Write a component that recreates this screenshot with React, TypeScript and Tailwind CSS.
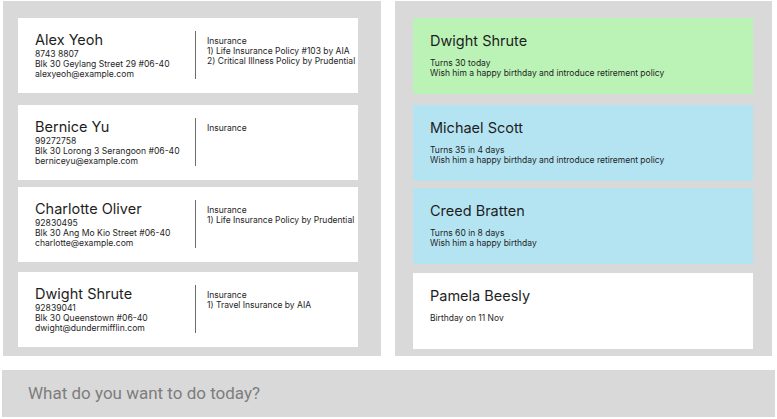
import React from 'react';

interface Client {
  name: string;
  phone: string;
  address: string;
  email: string;
  policies: string[];
  mt: string;
}

interface Reminder {
  name: string;
  lines: string[];
  tone: string;
  mt: string;
}

const clients: Client[] = [
  {
    name: 'Alex Yeoh',
    phone: '8743 8807',
    address: 'Blk 30 Geylang Street 29 #06-40',
    email: 'alexyeoh@example.com',
    policies: ['1) Life Insurance Policy #103 by AIA', '2) Critical Illness Policy by Prudential'],
    mt: 'mt-0',
  },
  {
    name: 'Bernice Yu',
    phone: '99272758',
    address: 'Blk 30 Lorong 3 Serangoon #06-40',
    email: 'berniceyu@example.com',
    policies: [],
    mt: 'mt-[12px]',
  },
  {
    name: 'Charlotte Oliver',
    phone: '92830495',
    address: 'Blk 30 Ang Mo Kio Street #06-40',
    email: 'charlotte@example.com',
    policies: ['1) Life Insurance Policy by Prudential'],
    mt: 'mt-[7px]',
  },
  {
    name: 'Dwight Shrute',
    phone: '92839041',
    address: 'Blk 30 Queenstown #06-40',
    email: 'dwight@dundermifflin.com',
    policies: ['1) Travel Insurance by AIA'],
    mt: 'mt-[10px]',
  },
];

const reminders: Reminder[] = [
  {
    name: 'Dwight Shrute',
    lines: ['Turns 30 today', 'Wish him a happy birthday and introduce retirement policy'],
    tone: 'bg-[#bbf3b7]',
    mt: 'mt-0',
  },
  {
    name: 'Michael Scott',
    lines: ['Turns 35 in 4 days', 'Wish him a happy birthday and introduce retirement policy'],
    tone: 'bg-[#b4e4f2]',
    mt: 'mt-[11px]',
  },
  {
    name: 'Creed Bratten',
    lines: ['Turns 60 in 8 days', 'Wish him a happy birthday'],
    tone: 'bg-[#b4e4f2]',
    mt: 'mt-[7px]',
  },
  {
    name: 'Pamela Beesly',
    lines: ['Birthday on 11 Nov'],
    tone: 'bg-white',
    mt: 'mt-[9px]',
  },
];

const ClientCard: React.FC<{ c: Client }> = ({ c }) => (
  <div className={`${c.mt} w-[340px] h-[75px] bg-white flex text-[#1e1e1e] overflow-hidden`}>
    <div className="w-[177px] pl-[17px] pt-[13px] flex-shrink-0">
      <h2 className="text-[14.5px] leading-[18px]">{c.name}</h2>
      <div className="text-[8.6px] leading-[10px]">
        <p>{c.phone}</p>
        <p>{c.address}</p>
        <p>{c.email}</p>
      </div>
    </div>
    <div className="w-px h-[48px] mt-[13px] bg-[#6b6b6b] flex-shrink-0" />
    <div className="pl-[11px] pt-[18px] text-[8.5px] leading-[10px] whitespace-nowrap">
      <p>Insurance</p>
      {c.policies.map(p => (
        <p key={p}>{p}</p>
      ))}
    </div>
  </div>
);

const ReminderCard: React.FC<{ r: Reminder }> = ({ r }) => (
  <div className={`${r.mt} ${r.tone} w-[340px] h-[76px] pl-[17px] pt-[14px] text-[#1e1e1e]`}>
    <h2 className="text-[14.5px] leading-[18px]">{r.name}</h2>
    <div className="mt-[8px] text-[8.5px] leading-[10px]">
      {r.lines.map(l => (
        <p key={l}>{l}</p>
      ))}
    </div>
  </div>
);

export default function App() {
  return (
    <div
      className="w-[777px] h-[419px] bg-white flex flex-col pt-px overflow-hidden"
      style={{ fontFamily: 'Inter, "Noto Sans", sans-serif' }}
    >
      <div className="flex gap-[14px] pl-[3px] h-[355px]">
        <div className="w-[378px] bg-[#d9d9d9] flex flex-col pl-[15px] pt-[17px]">
          {clients.map(c => (
            <ClientCard key={c.name} c={c} />
          ))}
        </div>
        <div className="w-[377px] bg-[#d9d9d9] flex flex-col pl-[18px] pt-[17px]">
          {reminders.map(r => (
            <ReminderCard key={r.name} r={r} />
          ))}
        </div>
      </div>
      <div className="mt-[14px] ml-[2px] w-[773px] h-[47px] bg-[#d9d9d9] flex items-center pl-[26px]">
        <span className="text-[17px] text-[#7d7d7d]" style={{ fontFamily: 'Roboto, sans-serif' }}>
          What do you want to do today?
        </span>
      </div>
    </div>
  );
}
